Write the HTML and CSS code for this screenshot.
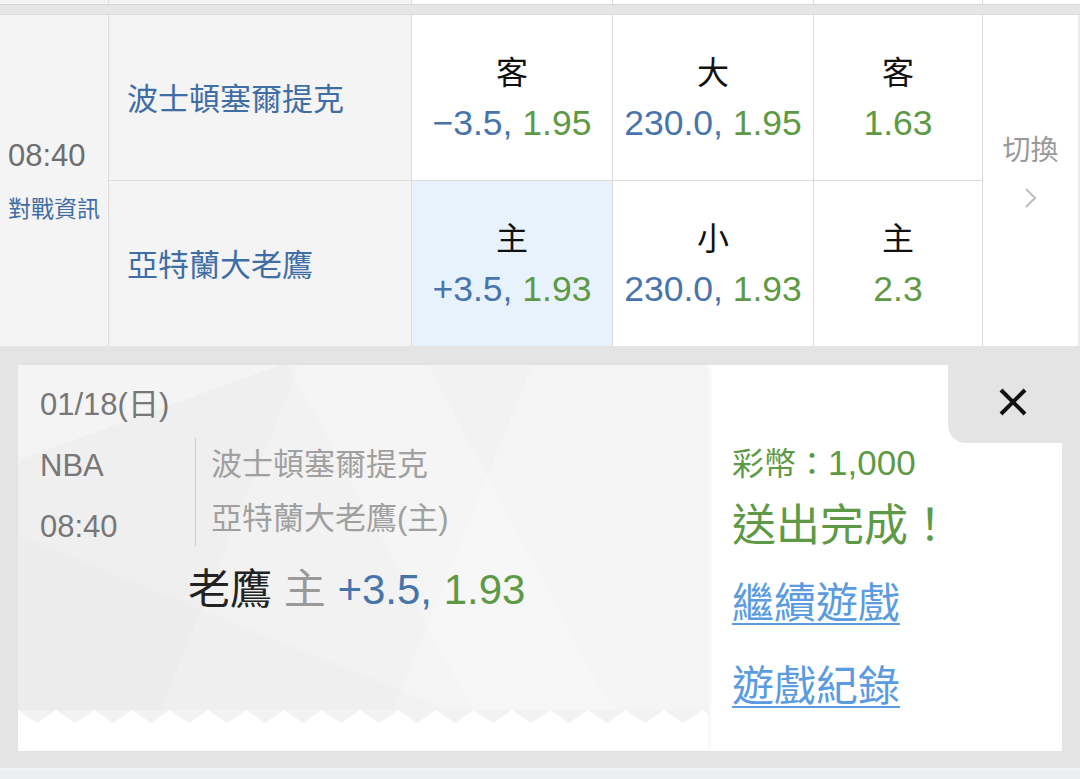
FILE: index.html
```html
<!DOCTYPE html>
<html lang="zh-Hant">
<head>
  <meta charset="UTF-8" />
  <meta name="viewport" content="width=device-width, initial-scale=1.0"/>
  <title>投注單</title>
  <link rel="stylesheet" href="styles.css">
</head>
<body>
  <div class="grid prev-row">
    <span></span><span></span><span></span><span></span><span></span><span></span>
  </div>

  <div class="grid match">
    <div class="time-cell">
      <div class="time">08:40</div>
      <a class="info">對戰資訊</a>
    </div>
    <div class="team">波士頓塞爾提克</div>
    <div class="odd">
      <div class="side">客</div>
      <div class="line"><span class="blue">−3.5,</span> <span class="green">1.95</span></div>
    </div>
    <div class="odd">
      <div class="side">大</div>
      <div class="line"><span class="blue">230.0,</span> <span class="green">1.95</span></div>
    </div>
    <div class="odd">
      <div class="side">客</div>
      <div class="line"><span class="green">1.63</span></div>
    </div>
    <div class="switch">
      <div class="switch-label">切換</div>
      <svg width="14" height="22" viewBox="0 0 14 22"><polyline points="2,2 11,11 2,20" fill="none" stroke="#bdbdbd" stroke-width="2"/></svg>
    </div>

    <div class="team">亞特蘭大老鷹</div>
    <div class="odd selected">
      <div class="side">主</div>
      <div class="line"><span class="blue">+3.5,</span> <span class="green">1.93</span></div>
    </div>
    <div class="odd">
      <div class="side">小</div>
      <div class="line"><span class="blue">230.0,</span> <span class="green">1.93</span></div>
    </div>
    <div class="odd">
      <div class="side">主</div>
      <div class="line"><span class="green">2.3</span></div>
    </div>
  </div>

  <div class="slip">
    <div class="card">
      <div class="ticket">
        <div class="ticket-body">
          <div class="date">01/18(日)</div>
          <div class="info-row">
            <div class="league">
              <div>NBA</div>
              <div class="kickoff">08:40</div>
            </div>
            <div class="teams">
              <div>波士頓塞爾提克</div>
              <div>亞特蘭大老鷹(主)</div>
            </div>
          </div>
          <div class="bet">
            <span class="pick">老鷹</span> <span class="pick-side">主</span> <span class="blue">+3.5,</span> <span class="green">1.93</span>
          </div>
        </div>
        <svg class="edge" width="100%" height="13">
          <defs>
            <pattern id="zz" width="38" height="13" patternUnits="userSpaceOnUse">
              <polygon points="0,0 38,0 19,13" fill="#f2f2f2"/>
            </pattern>
          </defs>
          <rect width="100%" height="13" fill="url(#zz)"/>
        </svg>
        <div class="ticket-foot"></div>
      </div>

      <div class="result">
        <div class="close-tab">
          <svg width="30" height="30" viewBox="0 0 30 30">
            <line x1="3" y1="3" x2="27" y2="27" stroke="#111" stroke-width="4"/>
            <line x1="27" y1="3" x2="3" y2="27" stroke="#111" stroke-width="4"/>
          </svg>
        </div>
        <div class="result-body">
          <div class="coins">彩幣：<span class="amount">1,000</span></div>
          <div class="done">送出完成！</div>
          <a class="link continue">繼續遊戲</a>
          <a class="link history">遊戲紀錄</a>
        </div>
      </div>
    </div>
  </div>

  <div class="next-row"></div>
</body>
</html>
```

FILE: styles.css
```css
body {
  margin: 0;
  padding: 0;
  font-family: "Liberation Sans", "Noto Sans CJK TC", sans-serif;
  background-color: #e6e6e6;
  color: #222;
  width: 1080px;
  height: 779px;
  overflow: hidden;
}

.grid {
  display: grid;
  grid-template-columns: 108px 302px 200px 200px 168px 1fr;
  gap: 1px;
  background-color: #dcdcdc;
}

.prev-row {
  height: 4px;
  border-bottom: 1px solid #d6d6d6;
}

.prev-row span {
  background-color: #fff;
}

.prev-row span:first-child,
.prev-row span:nth-child(2) {
  background-color: #f4f4f4;
}

.match {
  margin-top: 9px;
  border-top: 1px solid #dcdcdc;
  grid-template-rows: 165px 165px;
}

.time-cell {
  grid-row: span 2;
  background-color: #f4f4f4;
  display: flex;
  flex-direction: column;
  justify-content: center;
  padding-left: 8px;
}

.time {
  font-size: 31px;
  line-height: 36px;
  color: #6e6e6e;
}

.info {
  margin-top: 20px;
  font-size: 23px;
  line-height: 30px;
  color: #3f6ea5;
}

.team {
  background-color: #f4f4f4;
  display: flex;
  align-items: center;
  padding-left: 18px;
  padding-bottom: 3px;
  font-size: 31px;
  color: #3f6ea5;
}

.odd {
  background-color: #fff;
  display: flex;
  flex-direction: column;
  justify-content: center;
  align-items: center;
}

.odd.selected {
  background-color: #e7f2fc;
}

.side {
  font-size: 32px;
  line-height: 50px;
  color: #111;
}

.line {
  font-size: 35.5px;
  line-height: 50px;
  white-space: nowrap;
}

.blue {
  color: #4775ab;
}

.green {
  color: #5e9a45;
}

.switch {
  grid-column: 6;
  grid-row: 1 / span 2;
  background-color: #fff;
  display: flex;
  flex-direction: column;
  align-items: center;
  justify-content: center;
  gap: 16px;
  padding-bottom: 22px;
  border-right: 2px solid #ececec;
}

.switch-label {
  font-size: 28px;
  line-height: 40px;
  color: #9a9a9a;
}

.slip {
  padding: 19px 18px 17px;
  background-color: #e4e4e4;
}

.card {
  display: flex;
  height: 386px;
  background-color: #fff;
}

.ticket {
  width: 690px;
  display: flex;
  flex-direction: column;
  box-shadow: 3px 0 5px -2px rgba(0, 0, 0, 0.07);
}

.ticket-body {
  flex: 1;
  padding: 20px 22px 0;
  background-color: #f2f2f2;
  background-image:
    linear-gradient(160deg, rgba(255, 255, 255, 0.3) 0 16%, transparent 16%),
    linear-gradient(62deg, transparent 0 52%, rgba(255, 255, 255, 0.22) 52% 68%, transparent 68%),
    linear-gradient(112deg, rgba(0, 0, 0, 0.01) 0 34%, transparent 34% 62%, rgba(255, 255, 255, 0.2) 62%),
    linear-gradient(22deg, rgba(0, 0, 0, 0.012) 0 28%, transparent 28%);
}

.edge {
  display: block;
}

.ticket-foot {
  height: 28px;
}

.date {
  font-size: 31px;
  line-height: 40px;
  color: #777;
}

.info-row {
  display: flex;
  align-items: flex-start;
  margin-top: 13px;
}

.league {
  width: 155px;
  font-size: 31px;
  line-height: 56px;
  color: #777;
}

.kickoff {
  margin-top: 5px;
}

.teams {
  border-left: 1px solid #cfcfcf;
  padding-left: 15px;
  font-size: 31px;
  line-height: 54px;
  color: #a0a0a0;
}

.bet {
  margin-top: 10px;
  padding-left: 148px;
  font-size: 42px;
  line-height: 50px;
  white-space: nowrap;
}

.pick {
  color: #222;
}

.pick-side {
  color: #9a9a9a;
}

.result {
  flex: 1;
  display: flex;
  flex-direction: column;
}

.close-tab {
  align-self: flex-end;
  width: 114px;
  height: 78px;
  box-sizing: border-box;
  padding-left: 16px;
  padding-bottom: 4px;
  background-color: #e4e4e4;
  border-bottom-left-radius: 18px;
  display: flex;
  align-items: center;
  justify-content: center;
}

.result-body {
  padding-left: 24px;
}

.coins {
  font-size: 32px;
  line-height: 40px;
  color: #5e9a45;
}

.amount {
  font-size: 35px;
}

.done {
  margin-top: 14px;
  font-size: 44px;
  line-height: 56px;
  color: #5e9a45;
}

.link {
  display: block;
  width: fit-content;
  font-size: 42px;
  line-height: 56px;
  color: #5b9be0;
  text-decoration: underline;
  text-decoration-thickness: 2px;
  text-underline-offset: 5px;
}

.continue {
  margin-top: 22px;
}

.history {
  margin-top: 27px;
}

.next-row {
  height: 11px;
  border-top: 1px solid #f2f2f2;
  background-color: #eceef1;
}
```
